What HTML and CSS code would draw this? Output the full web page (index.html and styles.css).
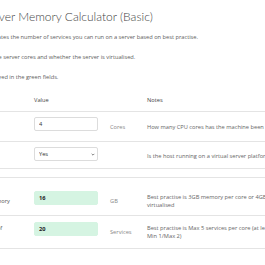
FILE: index.html
```html
<!DOCTYPE html>
<html>
<head>
	<title>Server Memory Calculator</title>
	<meta name="viewport" content="width=device-width">
	<link rel="stylesheet" href="styles.css">
</head>
<body>
	<div class="page">
		<div class="intro">
			<h2>Server Memory Calculator (Basic)</h2>
			<p>Calculates the number of services you can run on a server based on best practise.</p>
			<p>Choose server cores and whether the server is virtualised.</p>
			<p>Displayed in the green fields.</p>
		</div>

		<table class="calc">
			<colgroup>
				<col class="col-label">
				<col class="col-value">
				<col class="col-unit">
				<col class="col-notes">
			</colgroup>
			<thead>
				<tr>
					<th>Setting</th>
					<th>Value</th>
					<th></th>
					<th>Notes</th>
				</tr>
			</thead>
			<tbody>
				<tr>
					<td>CPU Cores</td>
					<td><input class="field" type="text" value="4"></td>
					<td class="unit">Cores</td>
					<td class="note">How many CPU cores has the machine been allocated?</td>
				</tr>
				<tr>
					<td>Virtualised</td>
					<td>
						<div class="select">
							<select>
								<option selected>Yes</option>
								<option>No</option>
							</select>
							<svg class="chevron" viewBox="0 0 6 4" width="4" height="3"><path d="M1 1 L3 3 L5 1" fill="none" stroke="#444" stroke-width="1"/></svg>
						</div>
					</td>
					<td class="unit"></td>
					<td class="note">Is the host running on a virtual server platform?</td>
				</tr>
				<tr class="spacer">
					<td></td><td></td><td></td><td></td>
				</tr>
				<tr class="result first">
					<td>Recommended Memory</td>
					<td><input class="field green" type="text" value="16" readonly></td>
					<td class="unit">GB</td>
					<td class="note">Best practise is 3GB memory per core or 4GB per core if<br>virtualised</td>
				</tr>
				<tr class="result last">
					<td>Maximum number of<br>services</td>
					<td><input class="field green" type="text" value="20" readonly></td>
					<td class="unit">Services</td>
					<td class="note">Best practise is Max 5 services per core (at least<br>Min 1/Max 2)</td>
				</tr>
			</tbody>
		</table>
	</div>
</body>
</html>
```

FILE: styles.css
```css
/* base */
body {
	margin: 0;
	overflow: hidden;
	background-color: #fff;
	color: #666;
	font-family: "Open Sans", Lato, sans-serif;
	font-size: 5.7px;
	line-height: 1.5;
}

.page {
	margin-left: -58px;
	padding-top: 9px;
}

.intro {
	padding-left: 40px;
}

.intro h2 {
	margin: 0 0 7.8px;
	font-family: Lato, "Open Sans", sans-serif;
	font-size: 12px;
	font-weight: 300;
	line-height: 16px;
	color: #444;
}

.intro p {
	margin: 0 0 11.5px;
	color: #606060;
}

/* calculator table */
.calc {
	border-collapse: collapse;
	table-layout: fixed;
	width: 461px;
}

.col-label { width: 88px; }
.col-value { width: 76px; }
.col-unit { width: 37px; }
.col-notes { width: 260px; }

.calc th {
	text-align: left;
	font-weight: normal;
	color: #444;
	padding: 3.5px 4px 6.3px;
	border-bottom: 1px solid #e4e4e4;
}

.calc td {
	padding: 5px 4px 4px;
	border-bottom: 1px solid #e4e4e4;
	vertical-align: middle;
	color: #555;
}

.calc .unit {
	color: #888;
}

.calc .note {
	white-space: nowrap;
	color: #666;
}

.calc .spacer td {
	padding: 4px;
}

.calc .result.first td {
	padding-top: 13px;
}

.calc .result.last td {
	padding-top: 6px;
	padding-bottom: 6px;
}

.field {
	display: block;
	box-sizing: border-box;
	width: 64px;
	height: 14px;
	margin: 0 0 6px;
	padding: 0 4px;
	border: 1px solid #dcdcdc;
	border-radius: 2px;
	background-color: #fff;
	color: #333;
	font-family: "Open Sans", Lato, sans-serif;
	font-size: 5.7px;
	outline: none;
}

.field.green {
	background-color: #d5f4e2;
	border-color: #d5f4e2;
	color: #222;
	font-weight: bold;
}

.select {
	position: relative;
	width: 64px;
	margin: 0 0 3px;
}

.select select {
	display: block;
	box-sizing: border-box;
	width: 100%;
	height: 14px;
	padding: 0 4px;
	border: 1px solid #dcdcdc;
	border-radius: 2px;
	background-color: #fff;
	color: #333;
	font-family: "Open Sans", Lato, sans-serif;
	font-size: 5.7px;
	-webkit-appearance: none;
	appearance: none;
	outline: none;
}

.select .chevron {
	position: absolute;
	right: 3px;
	top: 6px;
}
```
